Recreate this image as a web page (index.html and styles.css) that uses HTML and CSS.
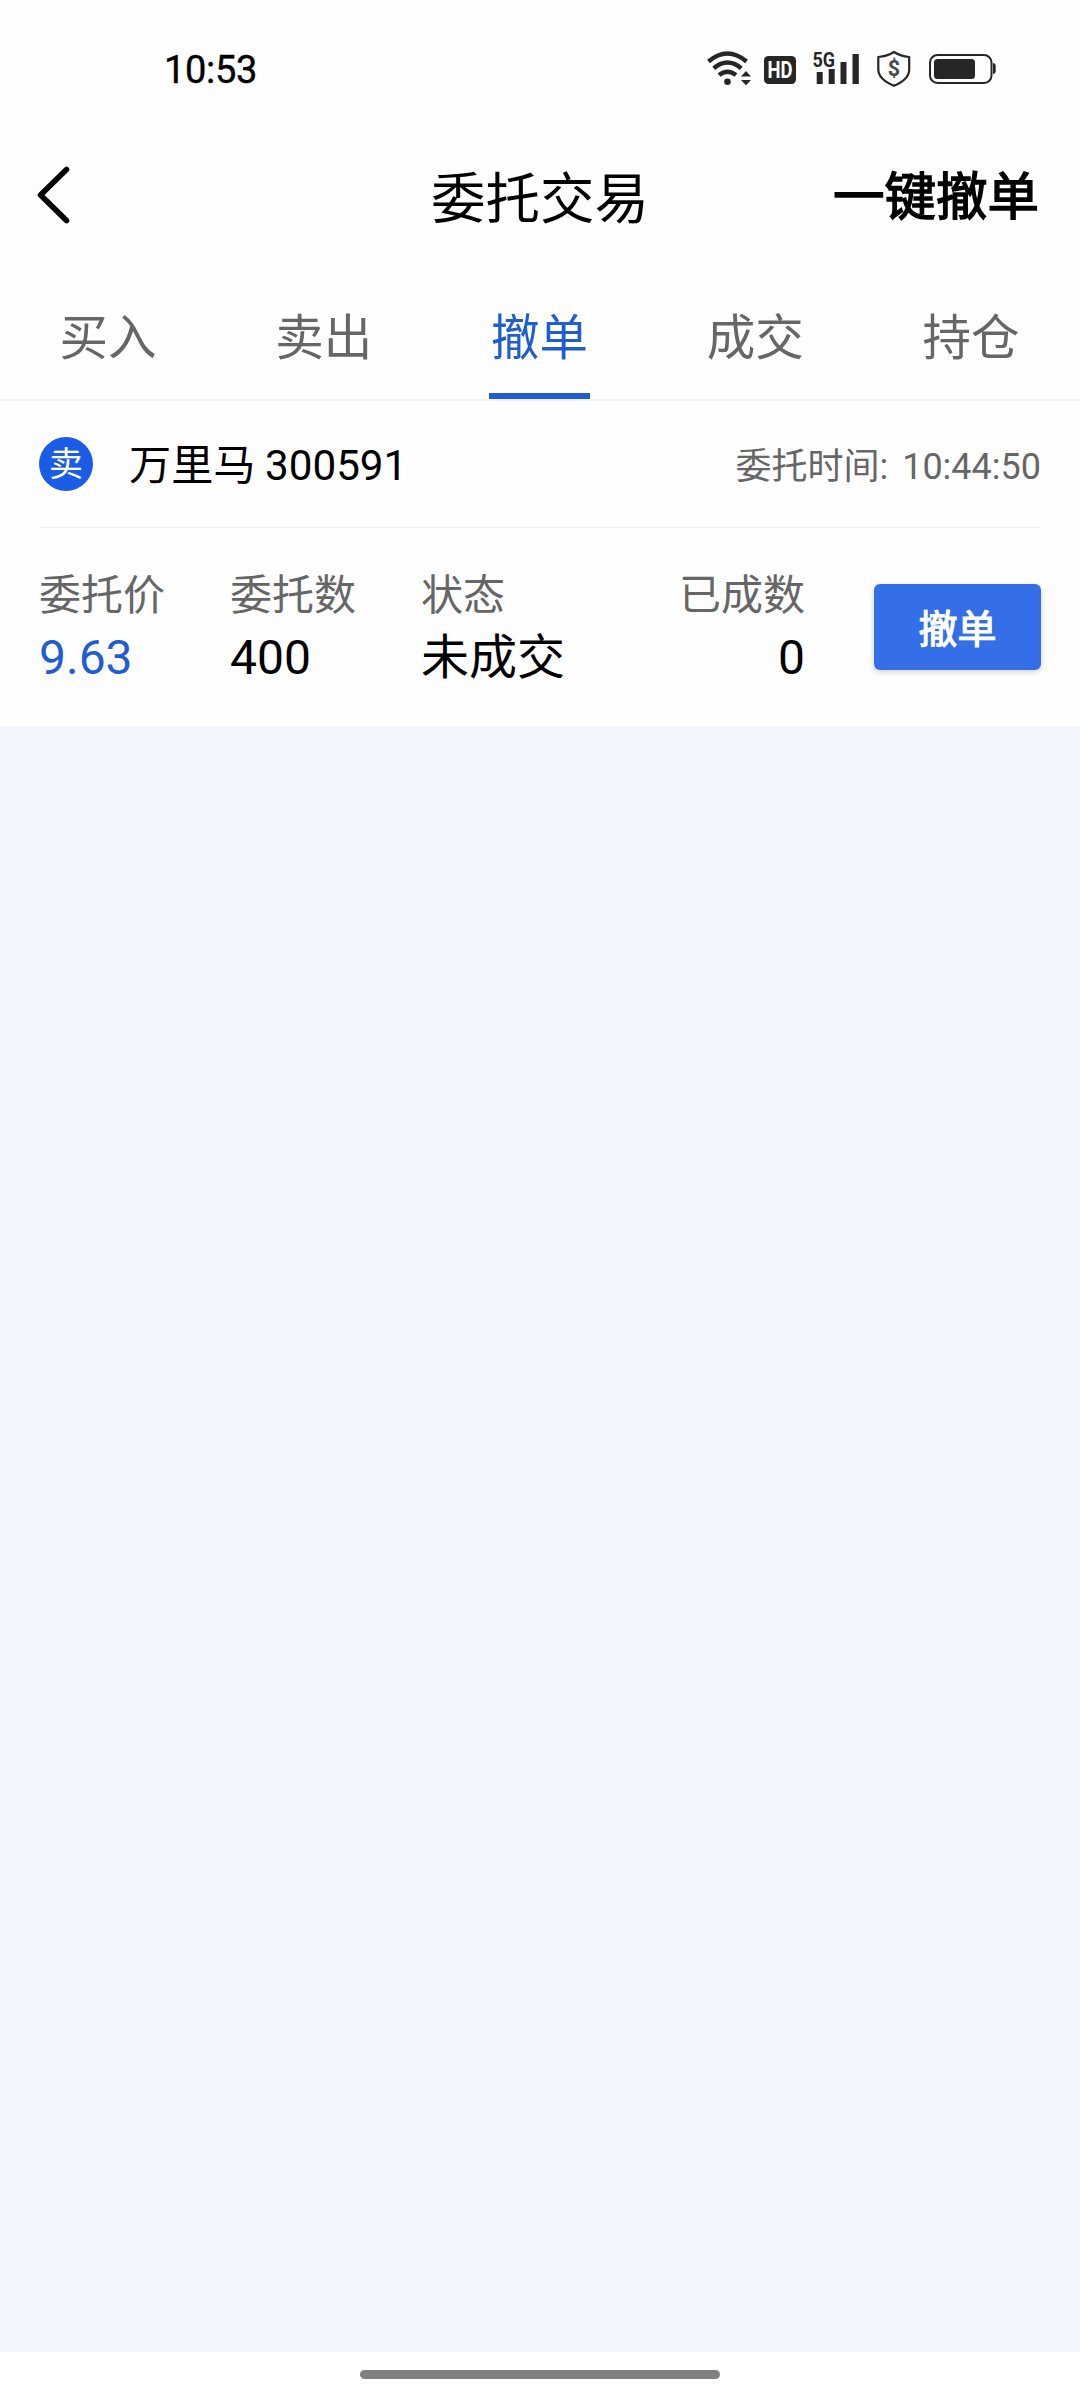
FILE: index.html
```html
<!DOCTYPE html>
<html lang="zh-CN">
<head>
    <meta charset="UTF-8">
    <meta name="viewport" content="width=device-width, initial-scale=1.0">
    <title>委托交易</title>
    <link rel="stylesheet" href="styles.css">
</head>
<body>

<div class="status-bar">
    <span class="clock">10:53</span>
    <div class="status-icons">
        <!-- wifi -->
        <svg class="wifi" width="45" height="38" viewBox="707 50 45 38">
            <g fill="none" stroke="#262626" stroke-width="4.4">
                <path d="M708.5 61.5 Q727.5 45.5 746.5 61.5"/>
                <path d="M713.7 68.2 Q727.5 56.8 741.3 68.2"/>
                <path d="M719 75 Q727.5 68.4 736 75"/>
            </g>
            <circle cx="727.5" cy="81.7" r="3.3" fill="#262626"/>
            <path d="M741 76.5 L746 71 L751 76.5 Z M741 80 L746 85.3 L751 80 Z" fill="#262626"/>
        </svg>
        <!-- hd -->
        <svg class="hd" width="32" height="38" viewBox="764 50 32 38">
            <rect x="764" y="56" width="32" height="28" rx="4.5" fill="#262626"/>
            <text x="780" y="78" text-anchor="middle" textLength="25" lengthAdjust="spacingAndGlyphs" font-size="23" fill="#fff">HD</text>
        </svg>
        <!-- signal -->
        <svg class="signal" width="47" height="38" viewBox="813 50 47 38">
            <text x="812.5" y="66.8" textLength="22.5" lengthAdjust="spacingAndGlyphs" font-size="20" fill="#262626">5G</text>
            <path d="M816.7 72h6v12h-6z M828.7 69h6v15h-6z M840.5 62h6v22h-6z M852.5 54h6.3v30h-6.3z" fill="#262626"/>
        </svg>
        <!-- shield -->
        <svg class="shield" width="34" height="38" viewBox="877 50 34 38">
            <path d="M894 52 C889 55.3 884 56.6 878.3 57 V69.5 C878.3 77 885 82 894 85.8 C903 82 909.2 77 909.2 69.5 V57 C904 56.6 899 55.3 894 52 Z" fill="none" stroke="#262626" stroke-width="2.2" stroke-linejoin="round"/>
            <text x="893.8" y="76.2" text-anchor="middle" font-size="21.5" fill="#4a4a4a">$</text>
        </svg>
        <!-- battery -->
        <svg class="battery" width="67" height="38" viewBox="929 50 67 38">
            <rect x="930" y="55" width="61.5" height="28" rx="7.5" fill="none" stroke="#262626" stroke-width="2"/>
            <rect x="934" y="59" width="41" height="20" rx="3.5" fill="#262626"/>
            <path d="M993 63 q2.7 0.3 2.7 3 v5 q0 2.7 -2.7 3 z" fill="#262626"/>
        </svg>
    </div>
</div>

<div class="header">
    <svg class="back" width="36" height="60" viewBox="0 0 36 60">
        <path d="M29.5 4.5 L3.5 30 L29.5 55.5" fill="none" stroke="#000" stroke-width="5.6" stroke-linecap="round" stroke-linejoin="round"/>
    </svg>
    <h1>委托交易</h1>
    <span class="cancel-all">一键撤单</span>
</div>

<div class="tabs">
    <div class="tab"><span>买入</span></div>
    <div class="tab"><span>卖出</span></div>
    <div class="tab active"><span>撤单</span></div>
    <div class="tab"><span>成交</span></div>
    <div class="tab"><span>持仓</span></div>
</div>

<div class="order">
    <div class="order-head">
        <span class="badge">卖</span>
        <span class="stock">万里马 300591</span>
        <span class="time">委托时间: <b>10:44:50</b></span>
    </div>
    <div class="order-body">
        <div class="col">
            <div class="label">委托价</div>
            <div class="value price">9.63</div>
        </div>
        <div class="col">
            <div class="label">委托数</div>
            <div class="value">400</div>
        </div>
        <div class="col">
            <div class="label">状态</div>
            <div class="value">未成交</div>
        </div>
        <div class="col right">
            <div class="label">已成数</div>
            <div class="value">0</div>
        </div>
        <button class="cancel">撤单</button>
    </div>
</div>

<div class="empty"></div>

<div class="nav-bar">
    <div class="pill"></div>
</div>

</body>
</html>
```
FILE: styles.css
```css
* {
    box-sizing: border-box;
}
body {
    width: 1080px;
    height: 2400px;
    margin: 0;
    display: flex;
    flex-direction: column;
    font-family: Roboto, "Noto Sans CJK SC", sans-serif;
    background-color: #fefefe;
    color: #000;
}
.status-bar {
    height: 138px;
    padding: 49px 84px 0 164px;
    display: flex;
    justify-content: space-between;
    align-items: flex-start;
}
.clock {
    font-size: 38px;
    line-height: 42px;
    letter-spacing: -0.3px;
    -webkit-text-stroke: 0.4px #000;
}
.status-icons {
    display: flex;
    padding-top: 1px;
}
.status-icons svg {
    overflow: visible;
}
.status-icons text {
    font-family: Roboto, sans-serif;
    font-weight: 700;
}
.hd {
    margin-left: 12px;
}
.signal {
    margin-left: 17px;
}
.shield {
    margin-left: 17px;
}
.battery {
    margin-left: 18px;
}
.header {
    height: 118px;
    padding: 0 37px;
    display: grid;
    grid-template-columns: 1fr auto 1fr;
    align-items: center;
}
.back {
    margin-bottom: 5px;
}
h1 {
    margin: 3px 0 0;
    font-size: 54.5px;
    line-height: 64px;
    font-weight: 400;
}
.cancel-all {
    justify-self: end;
    margin: 2px 4px 0 0;
    font-size: 51.5px;
    line-height: 64px;
    -webkit-text-stroke: 1.5px #000;
}
.tabs {
    height: 145px;
    padding-right: 1px;
    display: flex;
    border-bottom: 2px solid #f3f3f3;
}
.tab {
    flex: 1;
    display: flex;
    justify-content: center;
    font-size: 48.5px;
    line-height: 72px;
    color: #666;
}
.tab span {
    width: 101px;
    padding-top: 47px;
    text-align: center;
}
.tab.active span {
    color: #1f5dd0;
    border-bottom: 6px solid #1f5dd0;
}
.order {
    height: 325px;
    padding: 0 39px;
}
.order-head {
    height: 127px;
    display: flex;
    align-items: center;
    border-bottom: 1px solid #f1f1f1;
}
.badge {
    width: 54px;
    height: 54px;
    margin-right: 36px;
    border-radius: 50%;
    background-color: #1a5ce6;
    color: #fff;
    font-size: 34px;
    line-height: 54px;
    text-align: center;
}
.stock {
    padding-bottom: 5px;
    font-size: 42.2px;
    word-spacing: -1px;
}
.time {
    margin-left: auto;
    padding-bottom: 3px;
    font-size: 36px;
    color: #666;
}
.time b {
    margin-left: 5px;
    font-weight: 400;
}
.order-body {
    display: flex;
    padding-top: 37px;
}
.col {
    width: 191px;
}
.col.right {
    width: 193px;
    text-align: right;
}
.label {
    font-size: 42px;
    line-height: 61px;
    color: #666;
}
.value {
    font-size: 48px;
    line-height: 64px;
}
.price {
    color: #1f5dd0;
}
.cancel {
    width: 167px;
    height: 86px;
    margin: 19px 0 0 auto;
    padding: 0 0 3px;
    border: none;
    border-radius: 6px;
    background-color: #346fe8;
    box-shadow: 0 2px 6px rgba(0,0,0,0.18);
    color: #fff;
    font-family: inherit;
    font-size: 39px;
    -webkit-text-stroke: 1.2px #fff;
}
.empty {
    flex: 1;
    background-color: #f3f6ff;
}
.nav-bar {
    height: 48px;
    padding-top: 18px;
    background-color: #fff;
}
.pill {
    width: 360px;
    height: 9px;
    margin: 0 auto;
    border-radius: 5px;
    background-color: #808080;
}
```
